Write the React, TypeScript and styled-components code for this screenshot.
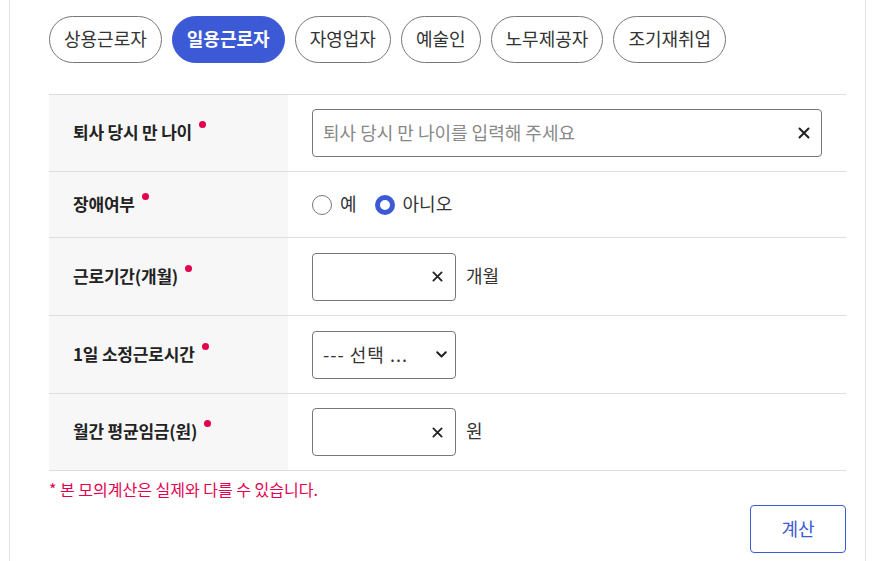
import styled, { createGlobalStyle } from 'styled-components'

const GlobalStyle = createGlobalStyle`
  html, body {
    margin: 0;
    padding: 0;
    background: #fff;
    font-family: "Noto Sans CJK KR", "Noto Sans", sans-serif;
    color: #222;
  }
`

const tabs = ['상용근로자', '일용근로자', '자영업자', '예술인', '노무제공자', '조기재취업']

function ClearIcon({ size = 12 }: { size?: number }) {
  return (
    <svg width={size} height={size} viewBox="0 0 12 12" aria-hidden="true">
      <path d="M1.5 1.5 L10.5 10.5 M10.5 1.5 L1.5 10.5" stroke="#222" strokeWidth="2" strokeLinecap="round" />
    </svg>
  )
}

function Chevron() {
  return (
    <svg width="11" height="7" viewBox="0 0 11 7" aria-hidden="true">
      <path d="M1.2 1.2 L5.5 5.5 L9.8 1.2" stroke="#222" strokeWidth="2" fill="none" strokeLinecap="round" strokeLinejoin="round" />
    </svg>
  )
}

export default function App() {
  return (
    <>
      <GlobalStyle />
      <Page>
        <TabBar>
          {tabs.map((t, i) => (
            <Tab key={t} $active={i === 1}>{t}</Tab>
          ))}
        </TabBar>

        <FormTable>
          <Row $h={77}>
            <Label>퇴사 당시 만 나이<Dot /></Label>
            <Field>
              <TextBox $wide>
                <Placeholder>퇴사 당시 만 나이를 입력해 주세요</Placeholder>
                <ClearIcon />
              </TextBox>
            </Field>
          </Row>
          <Row $h={66}>
            <Label>장애여부<Dot /></Label>
            <Field>
              <RadioGroup>
                <RadioItem><Radio $checked={false} /><Text>예</Text></RadioItem>
                <RadioItem><Radio $checked /><Text>아니오</Text></RadioItem>
              </RadioGroup>
            </Field>
          </Row>
          <Row $h={78}>
            <Label>근로기간(개월)<Dot /></Label>
            <Field>
              <TextBox><span /><ClearIcon size={11} /></TextBox>
              <Text>개월</Text>
            </Field>
          </Row>
          <Row $h={78}>
            <Label>1일 소정근로시간<Dot /></Label>
            <Field>
              <TextBox $select>
                <SelectText>--- 선택 ...</SelectText>
                <Chevron />
              </TextBox>
            </Field>
          </Row>
          <Row $h={77}>
            <Label>월간 평균임금(원)<Dot /></Label>
            <Field>
              <TextBox><span /><ClearIcon size={11} /></TextBox>
              <Text>원</Text>
            </Field>
          </Row>
        </FormTable>

        <Notice>* 본 모의계산은 실제와 다를 수 있습니다.</Notice>
        <Actions>
          <SubmitButton>계산</SubmitButton>
        </Actions>
      </Page>
    </>
  )
}

const Page = styled.div`
  margin-left: 9px;
  width: 857px;
  box-sizing: border-box;
  min-height: 561px;
  border-left: 1px solid #e4e4e4;
  border-right: 1px solid #e4e4e4;
  padding: 16px 19px 0 39px;
`

const TabBar = styled.div`
  display: flex;
  gap: 10px;
  margin-bottom: 31px;
`

const Tab = styled.button<{ $active: boolean }>`
  height: 47px;
  padding: 0 14px 3px;
  border-radius: 24px;
  border: 1px solid ${p => (p.$active ? '#3d5ad6' : '#777')};
  background: ${p => (p.$active ? '#3d5ad6' : '#fff')};
  color: ${p => (p.$active ? '#fff' : '#333')};
  font-family: inherit;
  font-size: 18px;
  font-weight: ${p => (p.$active ? 700 : 400)};
  cursor: pointer;
`

const FormTable = styled.div`
  border-top: 1px solid #ddd;
`

const Row = styled.div<{ $h: number }>`
  display: grid;
  grid-template-columns: 239px 1fr;
  height: ${p => p.$h}px;
  border-bottom: 1px solid #ddd;
  box-sizing: border-box;
`

const Label = styled.div`
  background: #f7f7f7;
  display: flex;
  align-items: center;
  padding: 0 0 3px 24px;
  font-size: 17px;
  font-weight: 700;
  color: #222;
  letter-spacing: -0.2px;
`

const Dot = styled.span`
  flex: none;
  width: 7px;
  height: 7px;
  border-radius: 50%;
  background: #e4004f;
  margin-left: 7px;
  transform: translateY(-7px);
`

const Field = styled.div`
  display: flex;
  align-items: center;
  padding-left: 24px;
  gap: 10px;
`

const TextBox = styled.div<{ $wide?: boolean; $select?: boolean }>`
  width: ${p => (p.$wide ? '510px' : '144px')};
  height: 48px;
  box-sizing: border-box;
  border: 1px solid #777;
  border-radius: 4px;
  display: flex;
  align-items: center;
  justify-content: space-between;
  padding: 0 ${p => (p.$wide ? 11 : p.$select ? 8 : 12)}px 0 10px;
  background: #fff;
`

const Placeholder = styled.span`
  font-size: 18px;
  color: #888;
  padding-bottom: 2px;
`

const SelectText = styled.span`
  font-size: 18px;
  color: #333;
  letter-spacing: 1px;
  padding-bottom: 2px;
`

const Text = styled.span`
  font-size: 18px;
  color: #333;
  padding-bottom: 4px;
`

const RadioGroup = styled.div`
  display: flex;
  gap: 18px;
`

const RadioItem = styled.label`
  display: flex;
  align-items: center;
  gap: 8px;
`

const Radio = styled.span<{ $checked: boolean }>`
  width: 20px;
  height: 20px;
  box-sizing: border-box;
  border-radius: 50%;
  border: ${p => (p.$checked ? '5px solid #3d5ad6' : '1px solid #777')};
  background: #fff;
`

const Notice = styled.p`
  margin: 6px 0 0;
  font-size: 16px;
  color: #e4004f;
`

const Actions = styled.div`
  display: flex;
  justify-content: flex-end;
  margin-top: 4px;
`

const SubmitButton = styled.button`
  width: 96px;
  height: 48px;
  padding-bottom: 3px;
  border: 1px solid #3d5ad6;
  border-radius: 4px;
  background: #fff;
  color: #3d5ad6;
  font-family: inherit;
  font-size: 18px;
  cursor: pointer;
`
